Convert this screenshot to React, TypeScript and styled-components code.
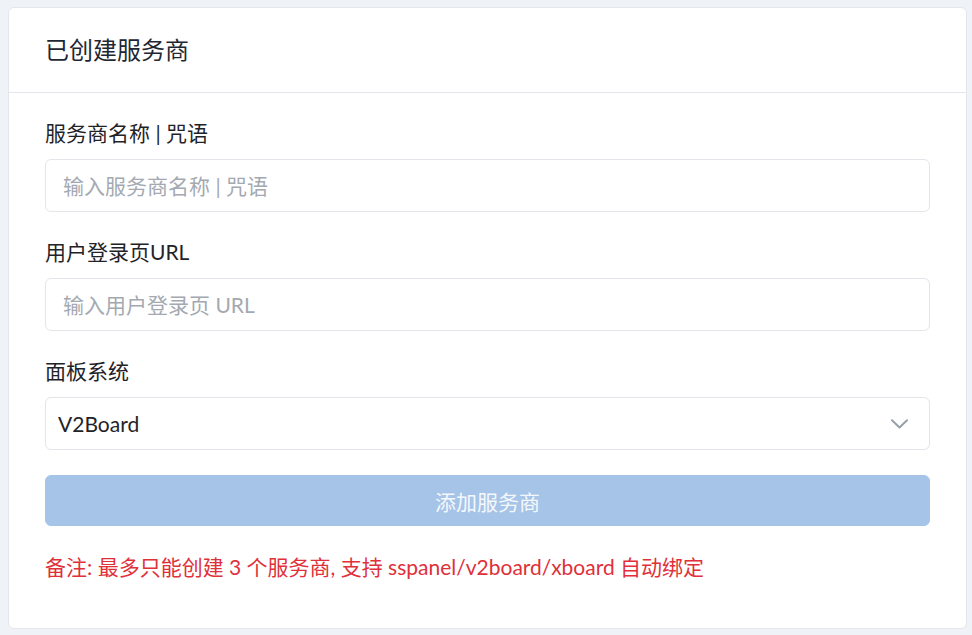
import React from "react";
import styled, { createGlobalStyle } from "styled-components";

const GlobalStyle = createGlobalStyle`
  html, body {
    margin: 0;
    padding: 0;
    background: #eff3f8;
  }
  body {
    font-family: Lato, "Noto Sans CJK SC", sans-serif;
    color: #212529;
  }
  * { box-sizing: border-box; }
`;

const Page = styled.div`
  padding: 7px 5px 6px 8px;
`;

const Card = styled.section`
  background: #ffffff;
  border: 1px solid #e3e6ea;
  border-radius: 6px;
`;

const CardHeader = styled.header`
  padding: 24px 36px;
  border-bottom: 1px solid #e3e6ea;
`;

const Title = styled.h2`
  margin: 0;
  font-size: 24px;
  line-height: 36px;
  font-weight: 400;
  color: #1f2733;
`;

const CardBody = styled.div`
  padding: 24px 36px 36px;
  display: flex;
  flex-direction: column;
`;

const Field = styled.div<{ $last?: boolean }>`
  display: flex;
  flex-direction: column;
  margin-bottom: ${(p) => (p.$last ? "25px" : "24px")};
`;

const Label = styled.label`
  font-size: 21px;
  line-height: 32px;
  margin-bottom: 10px;
  color: #1f2328;
`;

const TextInput = styled.input`
  height: 53px;
  width: 100%;
  border: 1px solid #e2e5e9;
  border-radius: 6px;
  padding: 0 17px;
  font-family: inherit;
  font-size: 21px;
  color: #1f2328;
  background: #fff;
  outline: none;
  &::placeholder {
    color: #a4a9b1;
  }
`;

const SelectWrap = styled.div`
  position: relative;
  height: 53px;
`;

const Select = styled.select`
  appearance: none;
  -webkit-appearance: none;
  width: 100%;
  height: 53px;
  border: 1px solid #e2e5e9;
  border-radius: 6px;
  padding: 0 12px;
  font-family: inherit;
  font-size: 21px;
  color: #1f2328;
  background: #fff;
  outline: none;
`;

const Chevron = styled.svg`
  position: absolute;
  right: 22px;
  top: 22px;
  width: 17px;
  height: 10px;
  pointer-events: none;
`;

const SubmitButton = styled.button`
  height: 51px;
  width: 100%;
  border: 1px solid #a7c4e7;
  border-radius: 6px;
  background: #a6c4e7;
  color: #f4f8fc;
  font-family: inherit;
  font-size: 21px;
  cursor: not-allowed;
  margin-bottom: 25px;
`;

const Note = styled.p`
  margin: 0 0 9px;
  font-size: 21px;
  line-height: 32px;
  color: #e0303a;
`;

export default function App() {
  return (
    <>
      <GlobalStyle />
      <Page>
        <Card>
          <CardHeader>
            <Title>已创建服务商</Title>
          </CardHeader>
          <CardBody>
            <Field>
              <Label>服务商名称 | 咒语</Label>
              <TextInput placeholder="输入服务商名称 | 咒语" />
            </Field>
            <Field>
              <Label>用户登录页URL</Label>
              <TextInput placeholder="输入用户登录页 URL" />
            </Field>
            <Field $last>
              <Label>面板系统</Label>
              <SelectWrap>
                <Select defaultValue="v2board">
                  <option value="v2board">V2Board</option>
                  <option value="sspanel">SSPanel</option>
                  <option value="xboard">XBoard</option>
                </Select>
                <Chevron viewBox="0 0 17 10" fill="none">
                  <path
                    d="M1 1.2 L8.5 8.5 L16 1.2"
                    stroke="#9aa0a8"
                    strokeWidth="2"
                    strokeLinecap="round"
                    strokeLinejoin="round"
                  />
                </Chevron>
              </SelectWrap>
            </Field>
            <SubmitButton disabled>添加服务商</SubmitButton>
            <Note>备注: 最多只能创建 3 个服务商, 支持 sspanel/v2board/xboard 自动绑定</Note>
          </CardBody>
        </Card>
      </Page>
    </>
  );
}
